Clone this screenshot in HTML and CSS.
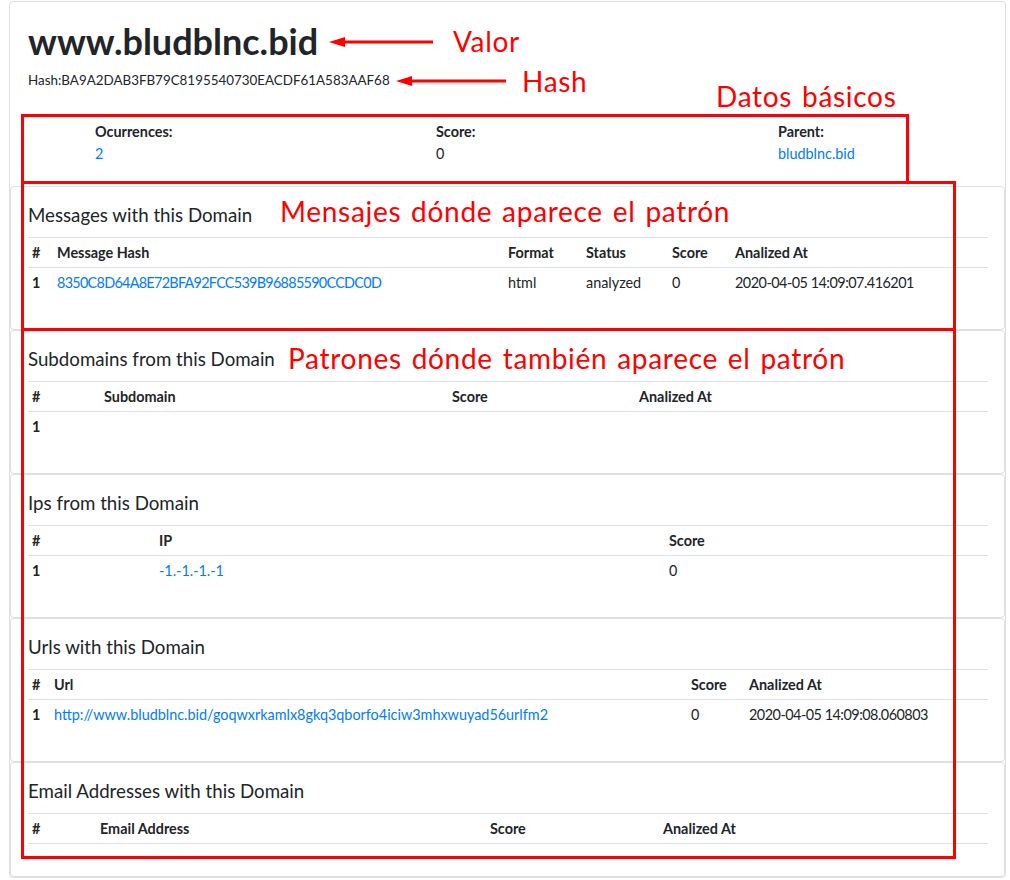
FILE: index.html
```html
<!DOCTYPE html>
<html lang="es">
<head>
<meta charset="utf-8">
<title>www.bludblnc.bid</title>
<link rel="stylesheet" href="styles.css">
</head>
<body>
<div class="page">
  <div class="outer-card">
    <div class="header">
      <h1 class="title">www.bludblnc.bid</h1>
      <p class="hash">Hash:BA9A2DAB3FB79C8195540730EACDF61A583AAF68</p>
      <div class="basics">
        <div class="fact"><div class="fact-label">Ocurrences:</div><a class="link" href="#">2</a></div>
        <div class="fact"><div class="fact-label">Score:</div><div class="fact-value">0</div></div>
        <div class="fact"><div class="fact-label">Parent:</div><a class="link" href="#">bludblnc.bid</a></div>
      </div>
    </div>

    <section class="section">
      <h5 class="section-title">Messages with this Domain</h5>
      <table class="tbl">
        <colgroup><col class="w25"><col class="w451"><col class="w78"><col class="w86"><col class="w63"><col></colgroup>
        <thead><tr><th>#</th><th>Message Hash</th><th>Format</th><th>Status</th><th>Score</th><th>Analized At</th></tr></thead>
        <tbody><tr><th>1</th><td><a class="link num-hash" href="#">8350C8D64A8E72BFA92FCC539B96885590CCDC0D</a></td><td>html</td><td>analyzed</td><td>0</td><td class="num-date">2020-04-05 14:09:07.416201</td></tr></tbody>
      </table>
    </section>

    <section class="section">
      <h5 class="section-title">Subdomains from this Domain</h5>
      <table class="tbl">
        <colgroup><col class="w72"><col class="w348"><col class="w187"><col></colgroup>
        <thead><tr><th>#</th><th>Subdomain</th><th>Score</th><th>Analized At</th></tr></thead>
        <tbody><tr><th>1</th><td></td><td></td><td></td></tr></tbody>
      </table>
    </section>

    <section class="section">
      <h5 class="section-title">Ips from this Domain</h5>
      <table class="tbl">
        <colgroup><col class="w127"><col class="w510"><col></colgroup>
        <thead><tr><th>#</th><th>IP</th><th>Score</th></tr></thead>
        <tbody><tr><th>1</th><td><a class="link" href="#">-1.-1.-1.-1</a></td><td>0</td></tr></tbody>
      </table>
    </section>

    <section class="section">
      <h5 class="section-title">Urls with this Domain</h5>
      <table class="tbl">
        <colgroup><col class="w22"><col class="w637"><col class="w58"><col></colgroup>
        <thead><tr><th>#</th><th>Url</th><th>Score</th><th>Analized At</th></tr></thead>
        <tbody><tr><th>1</th><td><a class="link" href="#">http://www.bludblnc.bid/goqwxrkamlx8gkq3qborfo4iciw3mhxwuyad56urlfm2</a></td><td>0</td><td class="num-date">2020-04-05 14:09:08.060803</td></tr></tbody>
      </table>
    </section>

    <section class="section">
      <h5 class="section-title">Email Addresses with this Domain</h5>
      <table class="tbl">
        <colgroup><col class="w68"><col class="w390"><col class="w173"><col></colgroup>
        <thead><tr><th>#</th><th>Email Address</th><th>Score</th><th>Analized At</th></tr></thead>
        <tbody></tbody>
      </table>
    </section>
  </div>

  <div class="annotations">
    <svg class="arrow arrow-valor" width="106" height="14" viewBox="0 0 106 14"><polygon points="0,7 16,2 16,12" fill="#ff0000"/><line x1="14" y1="7" x2="104" y2="7" stroke="#ff0000" stroke-width="3"/></svg>
    <div class="note note-valor">Valor</div>
    <svg class="arrow arrow-hash" width="112" height="14" viewBox="0 0 112 14"><polygon points="0,7 16,2 16,12" fill="#ff0000"/><line x1="14" y1="7" x2="110" y2="7" stroke="#ff0000" stroke-width="3"/></svg>
    <div class="note note-hash">Hash</div>
    <div class="note note-datos">Datos básicos</div>
    <div class="note note-mensajes">Mensajes dónde aparece el patrón</div>
    <div class="note note-patrones">Patrones dónde también aparece el patrón</div>
    <div class="box box-datos"></div>
    <div class="box box-mensajes"></div>
    <div class="box box-patrones"></div>
  </div>
</div>
</body>
</html>
```

FILE: styles.css
```css
* { box-sizing: border-box; }

html, body {
  margin: 0;
  padding: 0;
  background: #ffffff;
}

body {
  font-family: Lato, "Open Sans", sans-serif;
  font-size: 14.4px;
  line-height: 21px;
  color: #212529;
}

.page {
  position: relative;
  padding: 1px 0 0 9px;
}

.outer-card {
  width: 997px;
  border: 1px solid #dfdfdf;
  border-radius: 4px;
  background: #fff;
}

.header {
  padding: 18px 18px 22px 18px;
}

.title {
  margin: 0 0 8px 0;
  font-size: 36px;
  line-height: 43px;
  font-weight: 700;
  color: #212529;
}

.hash {
  margin: 0 0 31px 0;
  font-size: 13.4px;
  line-height: 19px;
}

.basics {
  display: grid;
  grid-template-columns: 341px 342px 1fr;
  margin-left: 67px;
}

.fact-label {
  font-weight: 700;
  line-height: 21.6px;
}

.fact-value,
.fact .link {
  display: block;
  line-height: 21.6px;
}

.link {
  color: #007bff;
  text-decoration: none;
}

.num-hash { letter-spacing: -0.7px; }
.num-date { letter-spacing: -0.5px; }

.section {
  border: 1px solid #dfdfdf;
  border-radius: 4px;
  padding: 18px 16px 18px 17px;
}

.section-title {
  margin: 0 0 10.4px 0;
  font-size: 18.7px;
  line-height: 21.6px;
  font-weight: 400;
  color: #212529;
}

.tbl {
  width: 100%;
  table-layout: fixed;
  border-collapse: collapse;
  margin-bottom: 14px;
}

.tbl th,
.tbl td {
  padding: 4px 4px;
  line-height: 21px;
  text-align: left;
  vertical-align: top;
  white-space: nowrap;
  overflow: visible;
}

.tbl th { font-weight: 700; }

.tbl thead th {
  border-top: 1px solid #dee2e6;
  border-bottom: 1px solid #dee2e6;
}

.w22 { width: 22px; }
.w25 { width: 25px; }
.w58 { width: 58px; }
.w63 { width: 63px; }
.w68 { width: 68px; }
.w72 { width: 72px; }
.w78 { width: 78px; }
.w86 { width: 86px; }
.w127 { width: 127px; }
.w173 { width: 173px; }
.w187 { width: 187px; }
.w348 { width: 348px; }
.w390 { width: 390px; }
.w451 { width: 451px; }
.w510 { width: 510px; }
.w637 { width: 637px; }

/* red annotations drawn over the screenshot */
.annotations {
  position: absolute;
  left: 0;
  top: 0;
  width: 0;
  height: 0;
}

.arrow { position: absolute; display: block; }
.arrow-valor { left: 329px; top: 35px; }
.arrow-hash { left: 396px; top: 74px; }

.note {
  position: absolute;
  font-family: Lato, "Open Sans", sans-serif;
  font-size: 28px;
  line-height: 28px;
  letter-spacing: 0.7px;
  word-spacing: 2px;
  color: #ff0000;
  white-space: nowrap;
}

.note-valor { left: 453px; top: 27px; }
.note-hash { left: 522px; top: 67px; }
.note-datos { left: 716px; top: 82px; }
.note-mensajes { left: 280px; top: 197px; }
.note-patrones { left: 288px; top: 344px; }

.box {
  position: absolute;
  border: 3px solid #ff0000;
}

.box-datos { left: 21px; top: 114px; width: 888px; height: 70px; }
.box-mensajes { left: 21px; top: 181px; width: 935px; height: 150px; }
.box-patrones { left: 21px; top: 328px; width: 935px; height: 531px; }
```
